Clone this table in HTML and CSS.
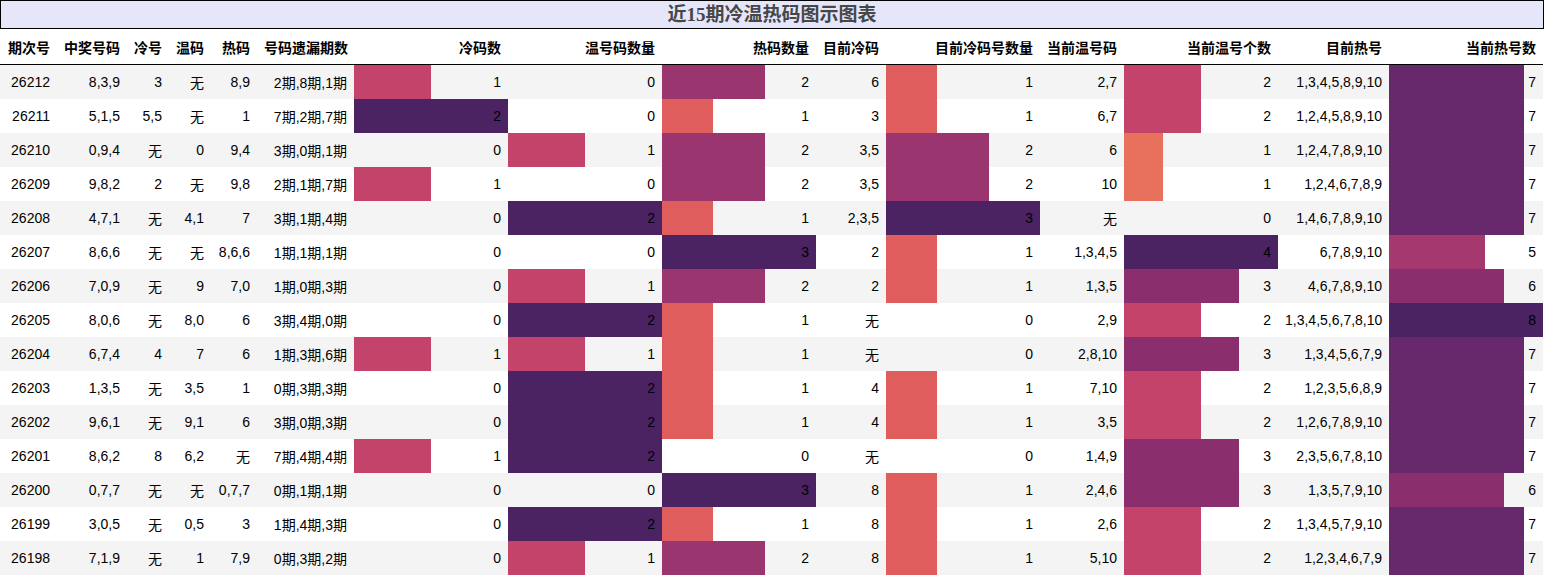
FILE: index.html
```html
<!DOCTYPE html>
<html lang="zh">
<head>
<meta charset="utf-8">
<title>近15期冷温热码图示图表</title>
<link rel="stylesheet" href="styles.css">
</head>
<body>
<div class="page">
  <div class="title">近15期冷温热码图示图表</div>
  <table class="grid">
    <colgroup>
      <col class="c57"><col class="c70"><col class="c42"><col class="c42"><col class="c46"><col class="c97">
      <col class="c154"><col class="c154"><col class="c154"><col class="c70"><col class="c154">
      <col class="c84"><col class="c154"><col class="c111"><col class="c154">
    </colgroup>
    <thead>
      <tr>
        <th>期次号</th><th>中奖号码</th><th>冷号</th><th>温码</th><th>热码</th><th>号码遗漏期数</th>
        <th>冷码数</th><th>温号码数量</th><th>热码数量</th><th>目前冷码</th><th>目前冷码号数量</th>
        <th>当前温号码</th><th>当前温号个数</th><th>目前热号</th><th>当前热号数</th>
      </tr>
    </thead>
    <tbody>
      <tr><td>26212</td><td>8,3,9</td><td>3</td><td>无</td><td>8,9</td><td>2期,8期,1期</td>
        <td class="bar f50" style="--w:50%">1</td><td class="bar">0</td><td class="bar f67" style="--w:66.667%">2</td><td>6</td><td class="bar f33" style="--w:33.333%">1</td>
        <td>2,7</td><td class="bar f50" style="--w:50%">2</td><td>1,3,4,5,8,9,10</td><td class="bar f88" style="--w:87.5%">7</td></tr>
      <tr><td>26211</td><td>5,1,5</td><td>5,5</td><td>无</td><td>1</td><td>7期,2期,7期</td>
        <td class="bar f100" style="--w:100%">2</td><td class="bar">0</td><td class="bar f33" style="--w:33.333%">1</td><td>3</td><td class="bar f33" style="--w:33.333%">1</td>
        <td>6,7</td><td class="bar f50" style="--w:50%">2</td><td>1,2,4,5,8,9,10</td><td class="bar f88" style="--w:87.5%">7</td></tr>
      <tr><td>26210</td><td>0,9,4</td><td>无</td><td>0</td><td>9,4</td><td>3期,0期,1期</td>
        <td class="bar">0</td><td class="bar f50" style="--w:50%">1</td><td class="bar f67" style="--w:66.667%">2</td><td>3,5</td><td class="bar f67" style="--w:66.667%">2</td>
        <td>6</td><td class="bar f25" style="--w:25%">1</td><td>1,2,4,7,8,9,10</td><td class="bar f88" style="--w:87.5%">7</td></tr>
      <tr><td>26209</td><td>9,8,2</td><td>2</td><td>无</td><td>9,8</td><td>2期,1期,7期</td>
        <td class="bar f50" style="--w:50%">1</td><td class="bar">0</td><td class="bar f67" style="--w:66.667%">2</td><td>3,5</td><td class="bar f67" style="--w:66.667%">2</td>
        <td>10</td><td class="bar f25" style="--w:25%">1</td><td>1,2,4,6,7,8,9</td><td class="bar f88" style="--w:87.5%">7</td></tr>
      <tr><td>26208</td><td>4,7,1</td><td>无</td><td>4,1</td><td>7</td><td>3期,1期,4期</td>
        <td class="bar">0</td><td class="bar f100" style="--w:100%">2</td><td class="bar f33" style="--w:33.333%">1</td><td>2,3,5</td><td class="bar f100" style="--w:100%">3</td>
        <td>无</td><td class="bar">0</td><td>1,4,6,7,8,9,10</td><td class="bar f88" style="--w:87.5%">7</td></tr>
      <tr><td>26207</td><td>8,6,6</td><td>无</td><td>无</td><td>8,6,6</td><td>1期,1期,1期</td>
        <td class="bar">0</td><td class="bar">0</td><td class="bar f100" style="--w:100%">3</td><td>2</td><td class="bar f33" style="--w:33.333%">1</td>
        <td>1,3,4,5</td><td class="bar f100" style="--w:100%">4</td><td>6,7,8,9,10</td><td class="bar f63" style="--w:62.5%">5</td></tr>
      <tr><td>26206</td><td>7,0,9</td><td>无</td><td>9</td><td>7,0</td><td>1期,0期,3期</td>
        <td class="bar">0</td><td class="bar f50" style="--w:50%">1</td><td class="bar f67" style="--w:66.667%">2</td><td>2</td><td class="bar f33" style="--w:33.333%">1</td>
        <td>1,3,5</td><td class="bar f75" style="--w:75%">3</td><td>4,6,7,8,9,10</td><td class="bar f75" style="--w:75%">6</td></tr>
      <tr><td>26205</td><td>8,0,6</td><td>无</td><td>8,0</td><td>6</td><td>3期,4期,0期</td>
        <td class="bar">0</td><td class="bar f100" style="--w:100%">2</td><td class="bar f33" style="--w:33.333%">1</td><td>无</td><td class="bar">0</td>
        <td>2,9</td><td class="bar f50" style="--w:50%">2</td><td>1,3,4,5,6,7,8,10</td><td class="bar f100" style="--w:100%">8</td></tr>
      <tr><td>26204</td><td>6,7,4</td><td>4</td><td>7</td><td>6</td><td>1期,3期,6期</td>
        <td class="bar f50" style="--w:50%">1</td><td class="bar f50" style="--w:50%">1</td><td class="bar f33" style="--w:33.333%">1</td><td>无</td><td class="bar">0</td>
        <td>2,8,10</td><td class="bar f75" style="--w:75%">3</td><td>1,3,4,5,6,7,9</td><td class="bar f88" style="--w:87.5%">7</td></tr>
      <tr><td>26203</td><td>1,3,5</td><td>无</td><td>3,5</td><td>1</td><td>0期,3期,3期</td>
        <td class="bar">0</td><td class="bar f100" style="--w:100%">2</td><td class="bar f33" style="--w:33.333%">1</td><td>4</td><td class="bar f33" style="--w:33.333%">1</td>
        <td>7,10</td><td class="bar f50" style="--w:50%">2</td><td>1,2,3,5,6,8,9</td><td class="bar f88" style="--w:87.5%">7</td></tr>
      <tr><td>26202</td><td>9,6,1</td><td>无</td><td>9,1</td><td>6</td><td>3期,0期,3期</td>
        <td class="bar">0</td><td class="bar f100" style="--w:100%">2</td><td class="bar f33" style="--w:33.333%">1</td><td>4</td><td class="bar f33" style="--w:33.333%">1</td>
        <td>3,5</td><td class="bar f50" style="--w:50%">2</td><td>1,2,6,7,8,9,10</td><td class="bar f88" style="--w:87.5%">7</td></tr>
      <tr><td>26201</td><td>8,6,2</td><td>8</td><td>6,2</td><td>无</td><td>7期,4期,4期</td>
        <td class="bar f50" style="--w:50%">1</td><td class="bar f100" style="--w:100%">2</td><td class="bar">0</td><td>无</td><td class="bar">0</td>
        <td>1,4,9</td><td class="bar f75" style="--w:75%">3</td><td>2,3,5,6,7,8,10</td><td class="bar f88" style="--w:87.5%">7</td></tr>
      <tr><td>26200</td><td>0,7,7</td><td>无</td><td>无</td><td>0,7,7</td><td>0期,1期,1期</td>
        <td class="bar">0</td><td class="bar">0</td><td class="bar f100" style="--w:100%">3</td><td>8</td><td class="bar f33" style="--w:33.333%">1</td>
        <td>2,4,6</td><td class="bar f75" style="--w:75%">3</td><td>1,3,5,7,9,10</td><td class="bar f75" style="--w:75%">6</td></tr>
      <tr><td>26199</td><td>3,0,5</td><td>无</td><td>0,5</td><td>3</td><td>1期,4期,3期</td>
        <td class="bar">0</td><td class="bar f100" style="--w:100%">2</td><td class="bar f33" style="--w:33.333%">1</td><td>8</td><td class="bar f33" style="--w:33.333%">1</td>
        <td>2,6</td><td class="bar f50" style="--w:50%">2</td><td>1,3,4,5,7,9,10</td><td class="bar f88" style="--w:87.5%">7</td></tr>
      <tr><td>26198</td><td>7,1,9</td><td>无</td><td>1</td><td>7,9</td><td>0期,3期,2期</td>
        <td class="bar">0</td><td class="bar f50" style="--w:50%">1</td><td class="bar f67" style="--w:66.667%">2</td><td>8</td><td class="bar f33" style="--w:33.333%">1</td>
        <td>5,10</td><td class="bar f50" style="--w:50%">2</td><td>1,2,3,4,6,7,9</td><td class="bar f88" style="--w:87.5%">7</td></tr>
    </tbody>
  </table>
</div>
</body>
</html>
```

FILE: styles.css
```css
html, body {
  margin: 0;
  padding: 0;
  background: #fff;
}

.page {
  width: 1544px;
}

.title {
  box-sizing: border-box;
  height: 29px;
  border: 1px solid #000;
  background: #e6e6fa;
  color: #474747;
  font-family: "Liberation Serif", "Noto Sans CJK SC", serif;
  font-weight: bold;
  font-size: 19px;
  line-height: 27px;
  text-align: center;
}

.grid {
  table-layout: fixed;
  width: 1543px;
  border-collapse: separate;
  border-spacing: 0;
  font-family: "Liberation Sans", "Noto Sans CJK SC", sans-serif;
  font-size: 14px;
  color: #000;
}

.c42 { width: 42px; }
.c46 { width: 46px; }
.c57 { width: 57px; }
.c70 { width: 70px; }
.c84 { width: 84px; }
.c97 { width: 97px; }
.c111 { width: 111px; }
.c154 { width: 154px; }

.grid th {
  height: 35px;
  padding: 0 7px;
  box-sizing: border-box;
  text-align: right;
  font-weight: bold;
  border-bottom: 1px solid #000;
  white-space: nowrap;
  vertical-align: middle;
}

.grid thead tr {
  height: 36px;
}

.grid tbody tr {
  height: 34px;
}

.grid tbody tr:nth-child(odd) {
  background: #f4f4f4;
}

.grid td {
  padding: 0 7px;
  text-align: right;
  white-space: nowrap;
  vertical-align: middle;
}

.bar {
  --c: transparent;
  --w: 0%;
  background: linear-gradient(90deg, var(--c) var(--w), transparent var(--w));
}

.f25 { --c: #e8715e; }
.f33 { --c: #e05d5d; }
.f50 { --c: #c3436a; }
.f63 { --c: #a4386f; }
.f67 { --c: #9b3570; }
.f75 { --c: #8a2e6e; }
.f88 { --c: #67296b; }
.f100 { --c: #4b2262; }
```
